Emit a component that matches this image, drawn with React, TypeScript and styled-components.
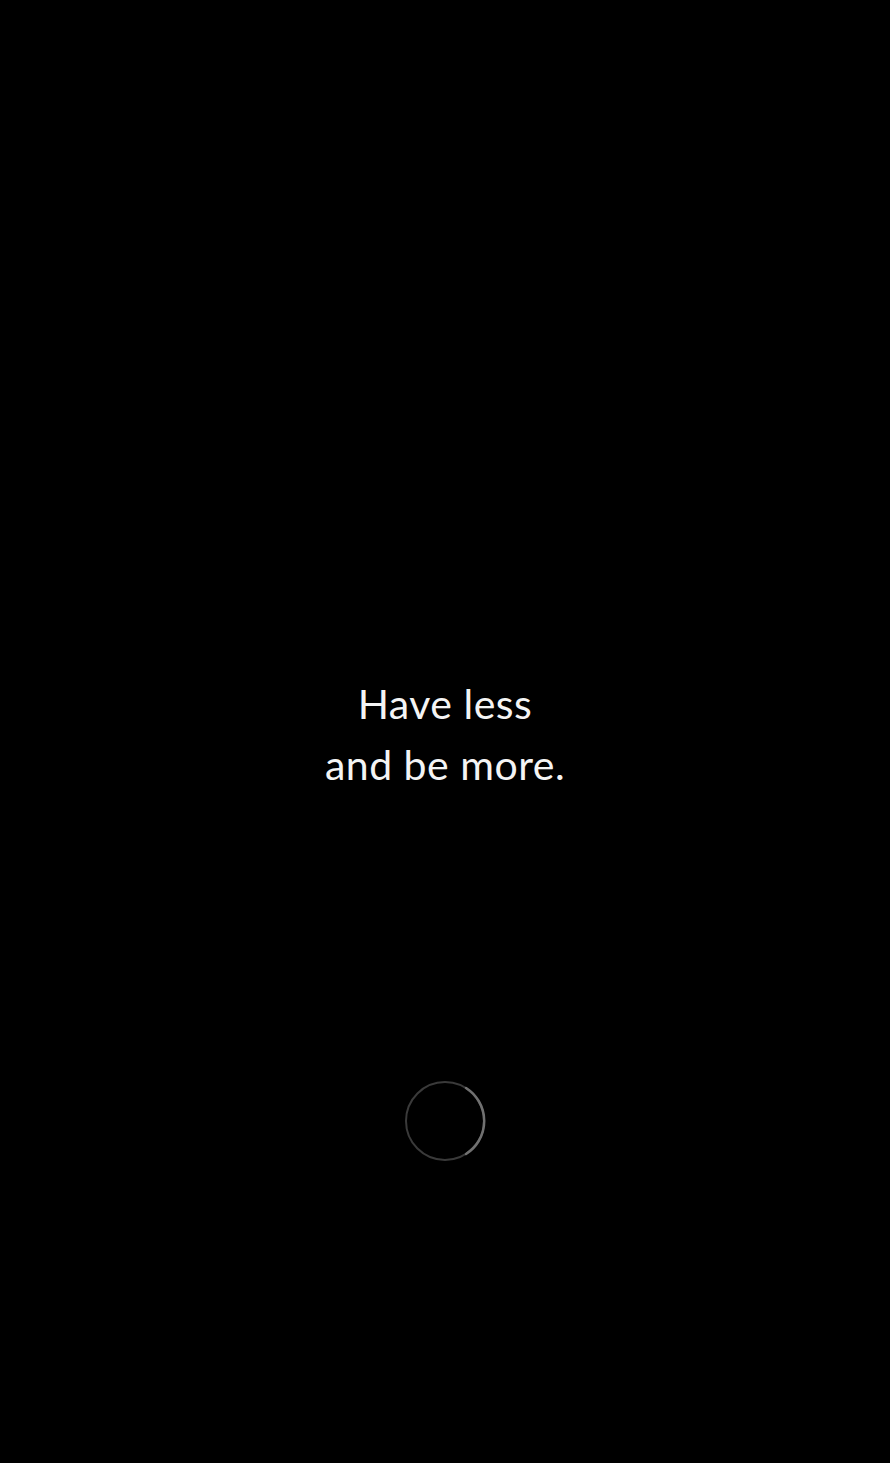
import styled, { createGlobalStyle, keyframes } from "styled-components";

const Global = createGlobalStyle`
  html, body {
    margin: 0;
    padding: 0;
    background: #000;
  }
  body {
    font-family: Lato, "Noto Sans", sans-serif;
    -webkit-font-smoothing: antialiased;
  }
`;

const spin = keyframes`
  from { transform: rotate(0deg); }
  to { transform: rotate(360deg); }
`;

const Screen = styled.main`
  min-height: 100vh;
  display: flex;
  flex-direction: column;
  align-items: center;
  padding-top: 673px;
  box-sizing: border-box;
  background: #000;
`;

const Quote = styled.h1`
  margin: 0;
  font-size: 41px;
  font-weight: 400;
  line-height: 61px;
  color: #f4f4f4;
  text-align: center;
  letter-spacing: 0.5px;
`;

const Loader = styled.div`
  margin-top: 285px;
  width: 82px;
  height: 82px;
  animation: ${spin} 1.2s linear infinite;
  animation-play-state: paused;
`;

// thin grey ring with a lighter arc on the right
const Spinner = () => (
  <Loader>
    <svg width="82" height="82" viewBox="0 0 82 82">
      <circle cx="41" cy="41" r="39" fill="none" stroke="#3a3a3a" strokeWidth="2" />
      <path
        d="M 62 8 A 39 39 0 0 1 62 74"
        fill="none"
        stroke="#707070"
        strokeWidth="2.5"
        strokeLinecap="round"
      />
    </svg>
  </Loader>
);

export default function App() {
  return (
    <>
      <Global />
      <Screen>
        <Quote>
          Have less
          <br />
          and be more.
        </Quote>
        <Spinner />
      </Screen>
    </>
  );
}
